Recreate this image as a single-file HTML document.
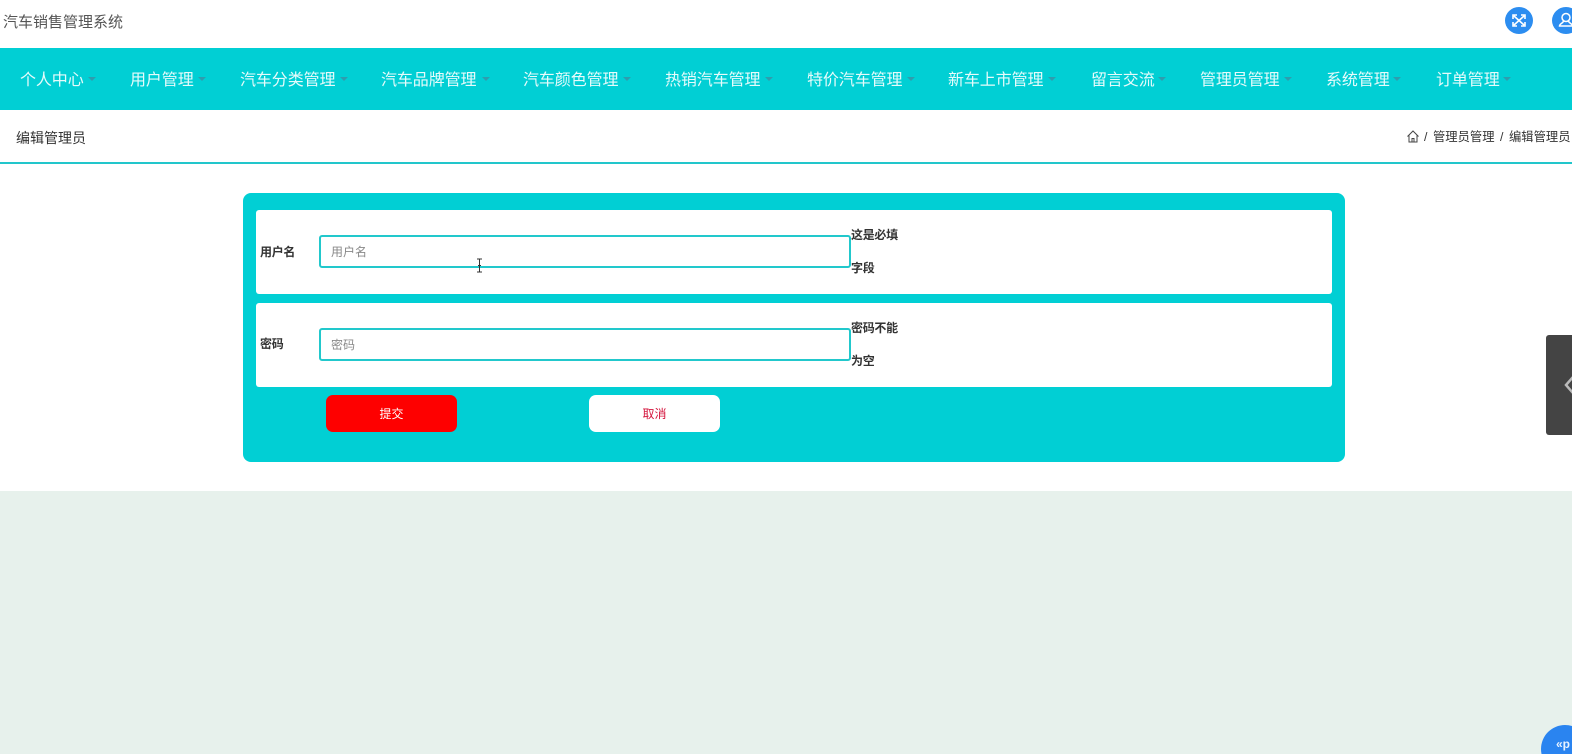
<!DOCTYPE html>
<html lang="zh-CN"><head><meta charset="utf-8"><title>编辑管理员</title>
<style>
*{box-sizing:border-box}
html,body{margin:0;padding:0;width:1572px;height:754px;overflow:hidden}
#w{width:1572px;height:754px;position:relative;overflow:hidden;background:#e7f1ec;font-family:"Liberation Sans","Noto Sans CJK SC",sans-serif}
.a{position:absolute;white-space:nowrap}
.n{position:absolute;top:69px;font-size:16px;letter-spacing:-.1px;line-height:23px;color:#e6fbfb;white-space:nowrap}
.c{position:absolute;top:77px;width:0;height:0;border-left:4px solid transparent;border-right:4px solid transparent;border-top:4px solid #2e9dae}
.r{position:absolute;left:256px;width:1076px;height:84px;background:#fff;border-radius:3px}
.i{position:absolute;left:319px;width:532px;height:33px;background:#fff;border:2px solid #22c8cc;border-radius:3px;color:#888;font-size:12px;line-height:30px;padding-left:10px}
.l{position:absolute;font-size:12px;font-weight:700;letter-spacing:-.3px;color:#333;line-height:16px;white-space:nowrap}
.b{position:absolute;font-size:12.300px;line-height:18px;color:#333;white-space:nowrap}
</style></head><body><div id="w">
<div class="a" style="left:0;top:0;width:1572px;height:491px;background:#fff"></div>
<div class="a" style="left:3px;top:14px;font-size:15px;line-height:18px;color:#555">汽车销售管理系统</div>
<div class="a" style="left:1505px;top:7px;width:28px;height:27px;border-radius:50%;background:#2c8df0">
<svg width="28" height="27" viewBox="0 0 28 27" fill="none" stroke="#fff" stroke-width="1.6"><path d="M9 9l10 9M19 9L9 18M8 12V8h4M16 8h4v4M20 15v4h-4M12 19H8v-4"/></svg></div>
<div class="a" style="left:1552px;top:7px;width:28px;height:27px;border-radius:50%;background:#2c8df0">
<svg width="28" height="27" viewBox="0 0 28 27" fill="none" stroke="#fff" stroke-width="1.5"><circle cx="14" cy="10.500" r="4"/><path d="M11.500 14c0 2-4 2.500-4 5h13c0-2.500-4-3-4-5"/></svg></div>
<div class="a" style="left:0;top:48px;width:1572px;height:62px;background:#01cfd4"></div>
<div class="n" style="left:20px">个人中心</div><div class="c" style="left:88px"></div>
<div class="n" style="left:130px">用户管理</div><div class="c" style="left:198px"></div>
<div class="n" style="left:240px">汽车分类管理</div><div class="c" style="left:340px"></div>
<div class="n" style="left:381px">汽车品牌管理</div><div class="c" style="left:482px"></div>
<div class="n" style="left:523px">汽车颜色管理</div><div class="c" style="left:623px"></div>
<div class="n" style="left:665px">热销汽车管理</div><div class="c" style="left:765px"></div>
<div class="n" style="left:807px">特价汽车管理</div><div class="c" style="left:907px"></div>
<div class="n" style="left:948px">新车上市管理</div><div class="c" style="left:1048px"></div>
<div class="n" style="left:1091px">留言交流</div><div class="c" style="left:1158px"></div>
<div class="n" style="left:1200px">管理员管理</div><div class="c" style="left:1284px"></div>
<div class="n" style="left:1326px">系统管理</div><div class="c" style="left:1393px"></div>
<div class="n" style="left:1436px">订单管理</div><div class="c" style="left:1503px"></div>
<div class="a" style="left:16px;top:128px;font-size:14px;line-height:20px;color:#333">编辑管理员</div>
<svg class="a" style="left:1407px;top:130px" width="12" height="13" viewBox="0 0 12 13" fill="none" stroke="#444" stroke-width="1"><path d="M.5 6.500L6 1l5.500 5.500M2 5.500V12h8V5.500M5 12V8.500h2V12"/></svg>
<div class="b" style="left:1424px;top:128px">/</div>
<div class="b" style="left:1433px;top:128px">管理员管理</div>
<div class="b" style="left:1500px;top:128px">/</div>
<div class="b" style="left:1509px;top:128px">编辑管理员</div>
<div class="a" style="left:0;top:162px;width:1572px;height:2px;background:#22c6cb"></div>
<div class="a" style="left:243px;top:193px;width:1102px;height:269px;background:#01cfd4;border-radius:8px"></div>
<div class="r" style="top:210px"></div>
<div class="r" style="top:303px"></div>
<div class="l" style="left:260px;top:244px">用户名</div>
<div class="i" style="top:235px">用户名</div>
<div class="l" style="left:851px;top:227px">这是必填</div>
<div class="l" style="left:851px;top:260px">字段</div>
<div class="l" style="left:260px;top:336px">密码</div>
<div class="i" style="top:328px">密码</div>
<div class="l" style="left:851px;top:320px">密码不能</div>
<div class="l" style="left:851px;top:353px">为空</div>
<div class="a" style="left:326px;top:395px;width:131px;height:37px;background:#fe0000;border-radius:7px;color:#fff;font-size:12px;line-height:38px;text-align:center">提交</div>
<div class="a" style="left:589px;top:395px;width:131px;height:37px;background:#fff;border-radius:7px;color:#d4143c;font-size:12px;line-height:38px;text-align:center">取消</div>
<svg class="a" style="left:475px;top:258px" width="9" height="15" viewBox="0 0 9 15" fill="none" stroke="#333" stroke-width="1"><path d="M2 1h5M2 14h5M4.500 1v13M3 7.500h3"/></svg>
<div class="a" style="left:1546px;top:335px;width:26px;height:100px;background:#444;border-radius:3px 0 0 3px"></div>
<svg class="a" style="left:1564px;top:375px" width="8" height="20" viewBox="0 0 8 20" fill="none" stroke="#bbb" stroke-width="2.500"><path d="M9 2L2 10l7 8"/></svg>
<div class="a" style="left:1541px;top:725px;width:48px;height:48px;border-radius:50%;background:#2a84f0"></div>
<div class="a" style="left:1556px;top:737px;color:#e8f2ff;font-size:12px;line-height:14px;font-weight:700">«p</div>
</div></body></html>
